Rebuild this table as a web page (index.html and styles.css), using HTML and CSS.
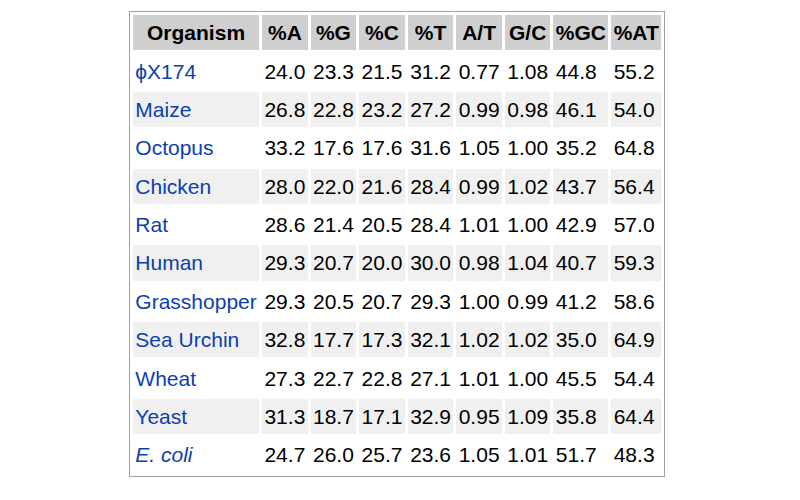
FILE: index.html
```html
<!DOCTYPE html>
<html>
<head>
<meta charset="utf-8">
<link rel="stylesheet" href="styles.css">
</head>
<body>
<table class="gc-table">
  <thead>
    <tr><th>Organism</th><th>%A</th><th>%G</th><th>%C</th><th>%T</th><th>A/T</th><th>G/C</th><th>%GC</th><th>%AT</th></tr>
  </thead>
  <tbody>
    <tr><td><a class="org" href="#">ϕX174</a></td><td>24.0</td><td>23.3</td><td>21.5</td><td>31.2</td><td>0.77</td><td>1.08</td><td>44.8</td><td>55.2</td></tr>
    <tr><td><a class="org" href="#">Maize</a></td><td>26.8</td><td>22.8</td><td>23.2</td><td>27.2</td><td>0.99</td><td>0.98</td><td>46.1</td><td>54.0</td></tr>
    <tr><td><a class="org" href="#">Octopus</a></td><td>33.2</td><td>17.6</td><td>17.6</td><td>31.6</td><td>1.05</td><td>1.00</td><td>35.2</td><td>64.8</td></tr>
    <tr><td><a class="org" href="#">Chicken</a></td><td>28.0</td><td>22.0</td><td>21.6</td><td>28.4</td><td>0.99</td><td>1.02</td><td>43.7</td><td>56.4</td></tr>
    <tr><td><a class="org" href="#">Rat</a></td><td>28.6</td><td>21.4</td><td>20.5</td><td>28.4</td><td>1.01</td><td>1.00</td><td>42.9</td><td>57.0</td></tr>
    <tr><td><a class="org" href="#">Human</a></td><td>29.3</td><td>20.7</td><td>20.0</td><td>30.0</td><td>0.98</td><td>1.04</td><td>40.7</td><td>59.3</td></tr>
    <tr><td><a class="org" href="#">Grasshopper</a></td><td>29.3</td><td>20.5</td><td>20.7</td><td>29.3</td><td>1.00</td><td>0.99</td><td>41.2</td><td>58.6</td></tr>
    <tr><td><a class="org" href="#">Sea Urchin</a></td><td>32.8</td><td>17.7</td><td>17.3</td><td>32.1</td><td>1.02</td><td>1.02</td><td>35.0</td><td>64.9</td></tr>
    <tr><td><a class="org" href="#">Wheat</a></td><td>27.3</td><td>22.7</td><td>22.8</td><td>27.1</td><td>1.01</td><td>1.00</td><td>45.5</td><td>54.4</td></tr>
    <tr><td><a class="org" href="#">Yeast</a></td><td>31.3</td><td>18.7</td><td>17.1</td><td>32.9</td><td>0.95</td><td>1.09</td><td>35.8</td><td>64.4</td></tr>
    <tr><td><a class="org italic" href="#">E. coli</a></td><td>24.7</td><td>26.0</td><td>25.7</td><td>23.6</td><td>1.05</td><td>1.01</td><td>51.7</td><td>48.3</td></tr>
  </tbody>
</table>
</body>
</html>
```
FILE: styles.css
```css
html, body {
  margin: 0;
  padding: 0;
  background: #ffffff;
}

body {
  padding: 11px 0 0 129px;
  font-family: "Liberation Sans", Arial, "DejaVu Sans", sans-serif;
  font-size: 21px;
  color: #000000;
}

.gc-table {
  border: 1px solid #a2a2a2;
  border-spacing: 3px;
  background: #ffffff;
}

.gc-table th,
.gc-table td {
  padding: 5.2px 2.35px;
  line-height: 25px;
  white-space: nowrap;
}

.gc-table th {
  background: #cfcfcf;
  font-weight: bold;
  text-align: center;
}

.gc-table td {
  text-align: left;
}

.gc-table tbody tr:nth-child(even) td {
  background: #f0f0f0;
}

.org {
  color: #0b3fb0;
  text-decoration: none;
}

.italic {
  font-style: italic;
}
```
